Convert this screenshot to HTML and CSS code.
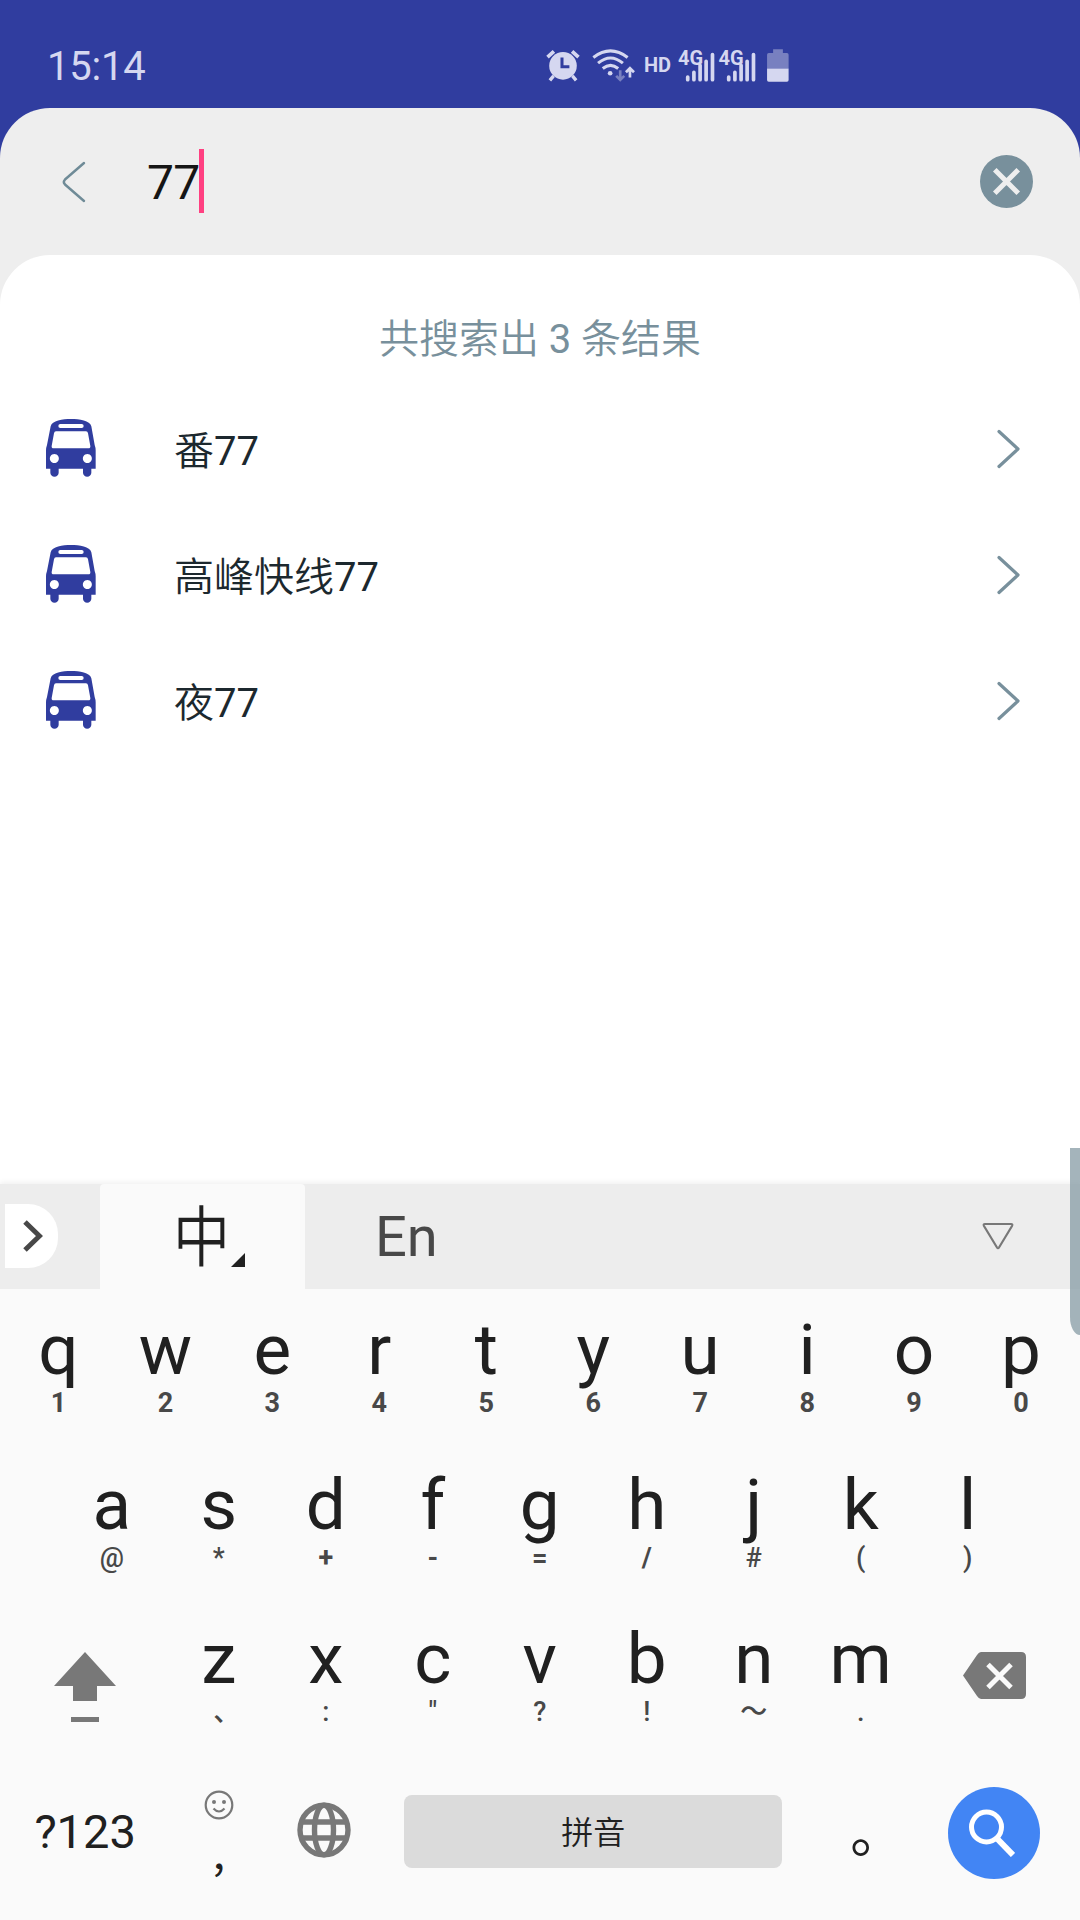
FILE: index.html
```html
<!DOCTYPE html>
<html lang="zh-CN">
<head>
<meta charset="utf-8">
<title>线路搜索</title>
<link rel="stylesheet" href="styles.css">
</head>
<body>
<svg class="defs" width="0" height="0" aria-hidden="true">
  <symbol id="bus" viewBox="0 0 150 174">
    <path fill="#303d9f" fill-rule="evenodd" d="M14 22C18 4 50 0 75 0s57 4 61 22l10 56q3 8 3 16v55h-13v12a12 12 0 0 1-25 0v-12H38v12a12 12 0 0 1-25 0v-12H0V94q0-8 3-16zM43 15a5 5 0 0 0 0 12h64a5 5 0 0 0 0-12zM30 37q-5 0-6 6l-7 38q-1 7 6 7h104q7 0 6-7l-7-38q-1-6-6-6zM25 105a13.500 13.500 0 1 0 .1 0zM124 105a13.500 13.500 0 1 0 .1 0z"/>
  </symbol>
  <symbol id="next" viewBox="0 0 24 42">
    <path d="M2 3.500l19 17.500L2 38.500" fill="none" stroke="#78909c" stroke-width="3.200" stroke-linecap="round" stroke-linejoin="round"/>
  </symbol>
  <symbol id="signal" viewBox="0 0 112 100">
    <g stroke="#d5d7f0" stroke-width="11" stroke-linecap="round">
      <path d="M29 83v8M47.500 69v22M66 48v43M84 36v55M103 16v75"/>
    </g>
  </symbol>
</svg>
<div class="screen">
  <header class="status">
    <span class="time">15:14</span>
    <div class="tray">
      <svg class="alarm" viewBox="50 56 100 98" fill="none" stroke="#d5d7f0">
        <circle cx="100" cy="106" r="41" fill="#d5d7f0" stroke="none"/>
        <path d="M54 80l19-17M146 80l-19-17" stroke-width="11"/>
        <path d="M72 136l-11 13M128 136l11 13" stroke-width="10"/>
        <path d="M97 81v28h22" stroke="#303d9f" stroke-width="9"/>
      </svg>
      <svg class="wifi" viewBox="188 56 128 98" fill="none" stroke="#d5d7f0">
        <path d="M192 81Q243 42 294 81M206 98Q243 67 280 98M220 114Q243 95 266 114" stroke-width="9"/>
        <circle cx="242" cy="128" r="7" fill="#d5d7f0" stroke="none"/>
        <path d="M272 119v29M260 136l12 12 12-12" stroke="#7880c0" stroke-width="8"/>
        <path d="M301 141v-27M289 125l12-12 12 12" stroke-width="8"/>
      </svg>
      <span class="hd">HD</span>
      <div class="net"><svg class="bars"><use href="#signal"/></svg><span class="gen">4G</span></div>
      <div class="net"><svg class="bars"><use href="#signal"/></svg><span class="gen">4G</span></div>
      <svg class="battery" viewBox="713 56 65 98">
        <path d="M731 57h29v11h12q5 0 5 5v41h-64V73q0-5 5-5h13z" fill="#7880c0"/>
        <path d="M713 114h64v34q0 5-5 5h-54q-5 0-5-5z" fill="#d5d7f0"/>
      </svg>
    </div>
  </header>
  <main class="sheet">
    <div class="search">
      <svg class="back" viewBox="0 0 24 42"><path d="M22 2L3 18.500q-2.500 2.500 0 5L22 40" fill="none" stroke="#6f8b97" stroke-width="2.400" stroke-linecap="round"/></svg>
      <span class="query">77</span><span class="caret"></span>
      <svg class="clear" viewBox="0 0 158 158"><circle cx="79" cy="79" r="79" fill="#78909c"/><path d="M44 44l70 70M114 44l-70 70" stroke="#eee" stroke-width="15"/></svg>
    </div>
    <section class="results">
      <p class="summary">共搜索出 <span class="latin">3</span> 条结果</p>
      <div class="item"><svg class="bus"><use href="#bus"/></svg><span class="name">番<span class="latin">77</span></span><svg class="next"><use href="#next"/></svg></div>
      <div class="item"><svg class="bus"><use href="#bus"/></svg><span class="name">高峰快线<span class="latin">77</span></span><svg class="next"><use href="#next"/></svg></div>
      <div class="item"><svg class="bus"><use href="#bus"/></svg><span class="name">夜<span class="latin">77</span></span><svg class="next"><use href="#next"/></svg></div>
    </section>
  </main>
  <section class="keyboard">
    <div class="langbar">
      <div class="expand"><svg width="20" height="32" viewBox="0 0 20 32"><path d="M2 2l14.500 14L2 30" fill="none" stroke="#484848" stroke-width="5"/></svg></div>
      <div class="tab"><span class="zh">中</span><svg class="corner" width="14" height="14" viewBox="0 0 14 14"><path d="M14 0v14H0z" fill="#202020"/></svg></div>
      <span class="en">En</span>
      <svg class="hide" width="32" height="28" viewBox="0 0 32 28"><path d="M3 2h26q2 0 1 2L17 25.500q-1 1.500-2 0L2 4q-1-2 1-2z" fill="none" stroke="#787878" stroke-width="2.200"/></svg>
    </div>
    <div class="row">
      <div class="key"><b>q</b><i class="num">1</i></div><div class="key"><b>w</b><i class="num">2</i></div><div class="key"><b>e</b><i class="num">3</i></div><div class="key"><b>r</b><i class="num">4</i></div><div class="key"><b>t</b><i class="num">5</i></div><div class="key"><b>y</b><i class="num">6</i></div><div class="key"><b>u</b><i class="num">7</i></div><div class="key"><b>i</b><i class="num">8</i></div><div class="key"><b>o</b><i class="num">9</i></div><div class="key"><b>p</b><i class="num">0</i></div>
    </div>
    <div class="row">
      <div class="key"><b>a</b><i>@</i></div><div class="key"><b>s</b><i>*</i></div><div class="key"><b>d</b><i class="num">+</i></div><div class="key"><b>f</b><i class="num">-</i></div><div class="key"><b>g</b><i class="num">=</i></div><div class="key"><b>h</b><i class="num">/</i></div><div class="key"><b>j</b><i>#</i></div><div class="key"><b>k</b><i>(</i></div><div class="key"><b>l</b><i>)</i></div>
    </div>
    <div class="row">
      <div class="wide"><svg class="shift" width="62" height="70" viewBox="0 0 62 70" fill="#787878"><path d="M31 0l31 34H43v15H19V34H0zM17 65h28v5H17z"/></svg></div>
      <div class="key"><b>z</b><i class="dun">、</i></div><div class="key"><b>x</b><i>:</i></div><div class="key"><b>c</b><i>"</i></div><div class="key"><b>v</b><i>?</i></div><div class="key"><b>b</b><i>!</i></div><div class="key"><b>n</b><i>～</i></div><div class="key"><b>m</b><i>.</i></div>
      <div class="wide"><svg class="erase" width="63" height="47" viewBox="0 0 63 47"><path d="M18 0h40q5 0 5 5v37q0 5-5 5H18q-2 0-4-3L0 23.500 14 3q2-3 4-3z" fill="#787878"/><path d="M25 12.500l23 23M48 12.500l-23 23" stroke="#fafafa" stroke-width="5"/></svg></div>
    </div>
    <div class="row last">
      <div class="wide"><span class="sym">?123</span></div>
      <div class="key emoji">
        <svg width="30" height="30" viewBox="0 0 30 30" fill="none" stroke="#787878" stroke-width="2.200"><circle cx="15" cy="15" r="13.300"/><path d="M9.500 18.500q5.500 6 11 0"/><circle cx="10" cy="12" r="2" fill="#787878" stroke="none"/><circle cx="20" cy="12" r="2" fill="#787878" stroke="none"/></svg>
        <span class="comma">,</span>
      </div>
      <div class="key globe"><svg width="54" height="56" viewBox="0 0 54 56" fill="none" stroke="#787878" stroke-width="5.400"><ellipse cx="27" cy="28" rx="24" ry="24.800"/><ellipse cx="27" cy="28" rx="9.500" ry="24.800"/><path d="M5 20h44M5 36h44"/></svg></div>
      <div class="spacebar">拼音</div>
      <div class="key stop"><span>。</span></div>
      <div class="wide"><div class="go"><svg width="46" height="48" viewBox="0 0 46 48" fill="none" stroke="#fff"><circle cx="17.500" cy="18" r="15" stroke-width="5"/><path d="M28 29.500l16 16.500" stroke-width="6"/></svg></div></div>
    </div>
  </section>
  <div class="edge"></div>
</div>
</body>
</html>
```
FILE: styles.css
```css
* { box-sizing: border-box; }
body { margin: 0; background: #303d9f; font-family: Roboto, "Noto Sans CJK SC", sans-serif; }
.defs { position: absolute; }
.screen { position: relative; width: 1080px; height: 1920px; display: flex; flex-direction: column; overflow: hidden; }
svg { display: block; flex: none; }
.latin { font-weight: 400; }

.status { height: 108px; flex: none; display: flex; padding: 0 0 0 47px; color: #d5d7f0; }
.time { width: 499px; font-size: 40px; line-height: 133px; letter-spacing: -.2px; }
.tray { display: flex; padding-top: 49px; height: 83px; }
.alarm { width: 34px; height: 33px; }
.wifi { width: 43px; height: 33px; margin-left: 12px; }
.hd { font-size: 20px; font-weight: 700; line-height: 33px; width: 34px; margin-left: 9px; }
.net { position: relative; width: 40.500px; height: 34px; }
.bars { width: 37.500px; height: 34px; }
.gen { position: absolute; left: 0; top: -8px; font-size: 20px; font-weight: 700; line-height: 34px; }
.battery { width: 22px; height: 33px; margin-left: 8px; }

.sheet { height: 1076px; flex: none; background: #eee; border-radius: 50px 50px 0 0; }
.search { height: 147px; display: flex; align-items: center; padding: 0 47px 0 62px; }
.back { width: 24px; height: 42px; }
.query { margin-left: 61px; font-size: 48px; line-height: 147px; padding-top: 2px; letter-spacing: -.8px; color: #151515; width: 52px; white-space: nowrap; }
.caret { width: 5px; height: 64px; margin-bottom: 1px; background: #ff4081; }
.clear { width: 53px; height: 53px; margin-left: auto; }
.results { height: 929px; background: #fff; border-radius: 50px 50px 0 0; padding-top: 51px; }
.summary { margin: 0; height: 79px; line-height: 67px; text-align: center; font-size: 40px; font-weight: 350; color: #78909c; }
.item { height: 126px; display: flex; align-items: center; padding: 0 59px 0 46px; }
.bus { width: 50px; height: 58px; }
.name { flex: 1; margin-left: 78px; padding-top: 7px; font-size: 40px; font-weight: 350; line-height: 119px; color: #1c282e; }
.next { width: 24px; height: 42px; margin-top: 2px; }

.keyboard { position: relative; height: 736px; background: #fafafa; box-shadow: 0 -2px 5px rgba(0, 0, 0, .06); }
.langbar { height: 105px; display: flex; align-items: center; background: #ededed; padding: 0 66px 0 5px; }
.expand { width: 53px; height: 64px; margin-top: -1px; background: #fff; border-radius: 0 30px 30px 0; display: flex; align-items: center; padding-left: 18px; }
.tab { width: 205px; height: 105px; margin-left: 42px; padding-left: 73px; background: #fafafa; border-radius: 4px 4px 0 0; display: flex; }
.zh { width: 58px; font-size: 57px; line-height: 110px; height: 105px; font-weight: 350; color: #202020; transform: scaleY(1.16); }
.corner { margin-top: 69px; }
.en { margin-left: 70px; font-size: 56px; line-height: 106px; color: #484848; }
.hide { margin-left: auto; margin-top: -2px; }

.row { height: 154.700px; display: flex; justify-content: center; padding: 0 5.500px 0 5px; }
.key { width: 107px; padding-top: 25px; text-align: center; }
.key b { display: block; font-size: 71px; line-height: 72px; font-weight: 400; color: #202020; }
.key i { display: block; margin-top: 2px; font-size: 27px; line-height: 30px; font-weight: 500; font-style: normal; color: #484848; }
.key .num { font-weight: 700; }
.key .dun { padding-left: 16px; }
.wide { flex: 1; display: flex; justify-content: center; }
.shift, .erase { margin-top: 53.500px; }
.sym { font-size: 47px; line-height: 158px; color: #202020; }
.emoji { display: flex; flex-direction: column; align-items: center; padding-top: 37px; }
.comma { font: 44px/50px "Noto Sans CJK SC", sans-serif; margin-top: 5px; color: #202020; }
.globe { padding: 49px 0 0 25px; }
.spacebar { width: 378px; height: 73px; margin: 42px 25px 0; border-radius: 8px; background: #dbdbdb; text-align: center; font-size: 32px; font-weight: 350; line-height: 77px; color: #202020; }
.stop { padding: 37px 0 0 33px; font-size: 54px; color: #202020; }
.go { width: 92px; height: 92px; margin-top: 34px; border-radius: 50%; background: #4285f4; padding: 22px 0 0 21px; }
.edge { position: absolute; right: 0; top: 1148px; width: 10.500px; height: 187px; background: rgba(134, 155, 164, .75); border-bottom-left-radius: 10px 18px; }
```
